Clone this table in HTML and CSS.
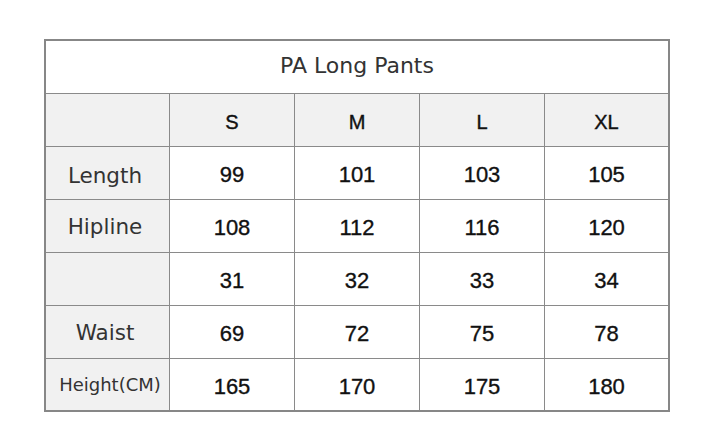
FILE: index.html
```html
<!DOCTYPE html>
<html>
<head>
<meta charset="utf-8">
<link rel="stylesheet" href="styles.css">
</head>
<body>
<div class="sheet">
  <div class="cell title">PA Long Pants</div>

  <div class="cell label"></div>
  <div class="cell head">S</div>
  <div class="cell head">M</div>
  <div class="cell head">L</div>
  <div class="cell head last">XL</div>

  <div class="cell label lower">Length</div>
  <div class="cell num">99</div>
  <div class="cell num">101</div>
  <div class="cell num">103</div>
  <div class="cell num last">105</div>

  <div class="cell label">Hipline</div>
  <div class="cell num">108</div>
  <div class="cell num">112</div>
  <div class="cell num">116</div>
  <div class="cell num last">120</div>

  <div class="cell label"></div>
  <div class="cell num">31</div>
  <div class="cell num">32</div>
  <div class="cell num">33</div>
  <div class="cell num last">34</div>

  <div class="cell label">Waist</div>
  <div class="cell num">69</div>
  <div class="cell num">72</div>
  <div class="cell num">75</div>
  <div class="cell num last">78</div>

  <div class="cell label small bottom">Height(CM)</div>
  <div class="cell num bottom">165</div>
  <div class="cell num bottom">170</div>
  <div class="cell num bottom">175</div>
  <div class="cell num bottom last">180</div>
</div>
</body>
</html>
```

FILE: styles.css
```css
html, body {
  margin: 0;
  padding: 0;
  background: #ffffff;
}

body {
  padding: 39px 0 0 44px;
}

.sheet {
  width: 626px;
  box-sizing: border-box;
  border: 2px solid #878787;
  display: grid;
  grid-template-columns: 124px 125px 125px 125px 123px;
  grid-template-rows: 53px 53px 53px 53px 53px 53px 51px;
}

.cell {
  box-sizing: border-box;
  border-right: 1px solid #8a8a8a;
  border-bottom: 1px solid #8a8a8a;
  display: flex;
  align-items: center;
  justify-content: center;
  background: #ffffff;
}

.cell.last {
  border-right: none;
}

.cell.bottom {
  border-bottom: none;
}

.title {
  grid-column: 1 / span 5;
  border-right: none;
  font-family: "DejaVu Sans", Verdana, sans-serif;
  font-size: 22px;
  color: #333333;
  padding-bottom: 4px;
}

.label {
  background: #f1f1f1;
  font-family: "DejaVu Sans", Verdana, sans-serif;
  font-size: 21.5px;
  color: #333333;
  padding-right: 5px;
}

.label.lower {
  padding-top: 4px;
}

.label.small {
  font-size: 18px;
  padding-right: 0;
  padding-left: 5px;
}

.head {
  background: #f1f1f1;
  font-family: "Liberation Sans", Arial, sans-serif;
  font-size: 20px;
  color: #111111;
  padding-top: 4px;
  -webkit-text-stroke: 0.4px #111111;
}

.num {
  font-family: "Liberation Sans", Arial, sans-serif;
  font-size: 22px;
  color: #111111;
  padding-top: 4px;
  -webkit-text-stroke: 0.35px #111111;
}
```
